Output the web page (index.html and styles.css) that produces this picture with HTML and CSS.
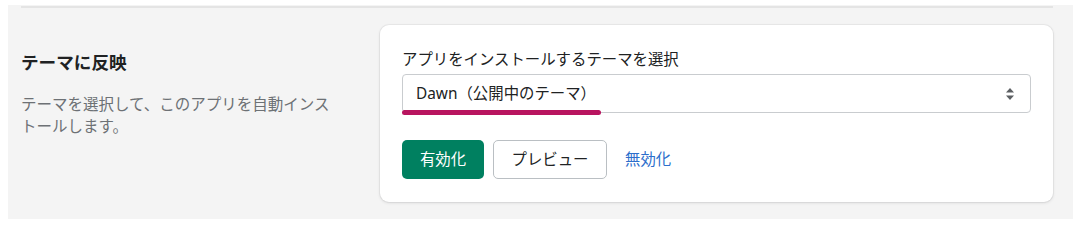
FILE: index.html
```html
<!DOCTYPE html>
<html lang="ja">
<head>
<meta charset="utf-8">
<link rel="stylesheet" href="styles.css">
</head>
<body>
<div class="page">
  <section class="section">
    <div class="intro">
      <h2 class="intro-title">テーマに反映</h2>
      <p class="intro-desc">テーマを選択して、このアプリを自動インストールします。</p>
    </div>
    <div class="card">
      <label class="field-label">アプリをインストールするテーマを選択</label>
      <div class="select">
        <span class="select-value">Dawn（公開中のテーマ）</span>
        <svg class="select-arrows" width="10" height="14" viewBox="0 0 10 14">
          <path d="M5 1 L9 5.5 H1 Z" fill="#5c5f62"/>
          <path d="M5 13 L9 8.5 H1 Z" fill="#5c5f62"/>
        </svg>
        <span class="highlight"></span>
      </div>
      <div class="actions">
        <button class="btn btn-primary">有効化</button>
        <button class="btn btn-secondary">プレビュー</button>
        <a class="btn-link">無効化</a>
      </div>
    </div>
  </section>
</div>
</body>
</html>
```

FILE: styles.css
```css
* { box-sizing: border-box; }
html, body { margin: 0; padding: 0; background: #ffffff; }
body {
  font-family: "Noto Sans", "Noto Sans CJK JP", sans-serif;
  color: #202223;
}
.page {
  margin: 5px 15px 0 8px;
  background: #f4f4f4;
  padding: 1px 20px 40px 13px;
  height: 214px;
}
.section {
  border-top: 2px solid #e4e4e4;
  display: grid;
  grid-template-columns: 340px 673px;
  column-gap: 19px;
  padding-top: 17px;
}
.intro { padding-top: 25px; }
.intro-title {
  margin: 0;
  font-size: 17.6px;
  line-height: 24px;
  font-weight: 700;
  color: #202223;
}
.intro-desc {
  margin: 19px 0 0;
  max-width: 320px;
  font-size: 15.5px;
  line-height: 22px;
  color: #6d7175;
}
.card {
  background: #ffffff;
  border-radius: 9px;
  box-shadow: 0 0 0 1px rgba(63,63,68,0.05), 0 1px 3px rgba(63,63,68,0.15);
  padding: 24px 22px 22px 22px;
  height: 177px;
}
.field-label {
  display: block;
  font-size: 15.4px;
  line-height: 22px;
  color: #202223;
}
.select {
  position: relative;
  margin-top: 3px;
  height: 39px;
  border: 1px solid #c9cccf;
  border-radius: 4px;
  display: flex;
  align-items: center;
  justify-content: space-between;
  padding: 0 15px 0 13px;
}
.select-value {
  font-size: 15.4px;
  line-height: 22px;
  color: #202223;
}
.select-arrows { display: block; }
.highlight {
  position: absolute;
  left: -1px;
  top: 35px;
  width: 199px;
  height: 5px;
  border-radius: 3px;
  background: #b8145f;
}
.actions {
  margin-top: 27px;
  display: flex;
  align-items: center;
  gap: 9px;
}
.btn {
  height: 39px;
  border-radius: 5px;
  font-family: inherit;
  font-size: 15.4px;
  line-height: 22px;
  padding: 0 17px;
  cursor: pointer;
}
.btn-primary {
  width: 82px;
  background: #008060;
  color: #ffffff;
  border: none;
}
.btn-secondary {
  width: 114px;
  background: #ffffff;
  color: #202223;
  border: 1px solid #babfc3;
}
.btn-link {
  margin-left: 9px;
  font-size: 15.4px;
  line-height: 22px;
  color: #2c6ecb;
}
```
